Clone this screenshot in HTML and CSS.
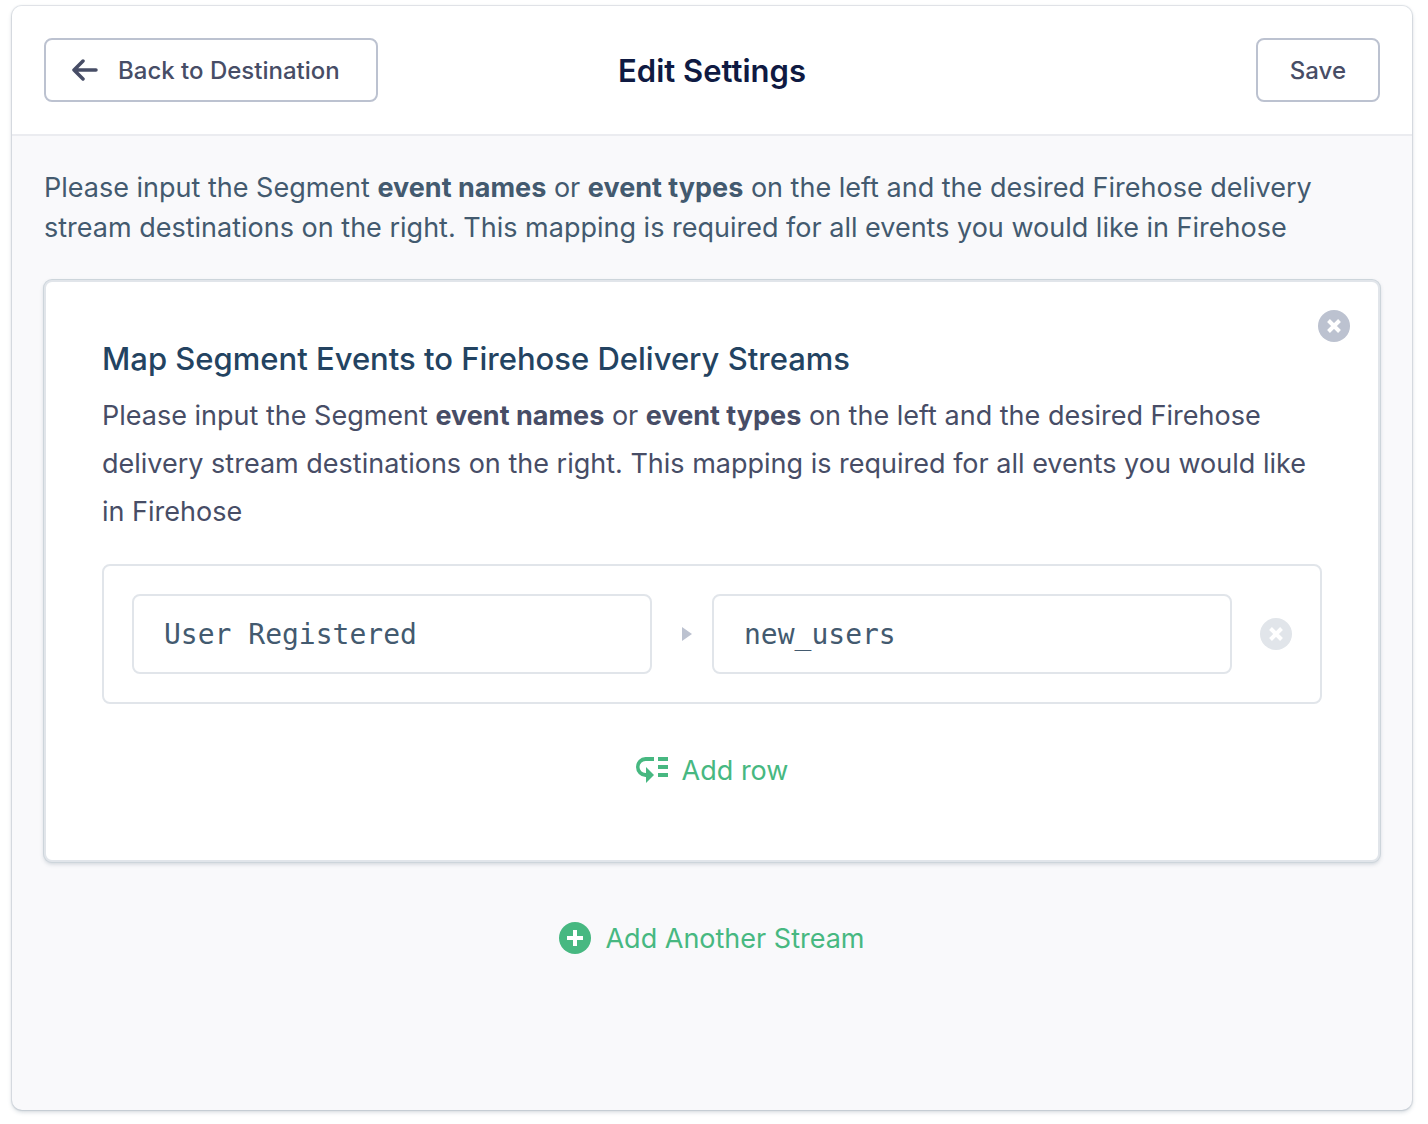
FILE: index.html
```html
<!DOCTYPE html>
<html lang="en">
<head>
  <meta charset="utf-8">
  <title>Edit Settings</title>
  <link rel="stylesheet" href="styles.css">
</head>
<body>
  <div class="card">
    <header class="header">
      <button class="button" type="button">
        <svg class="arrow-icon" width="26" height="22" viewBox="0 0 26 22" fill="none" stroke="currentColor" stroke-width="3.500" stroke-linecap="round" stroke-linejoin="round">
          <path d="M11 2L2 11l9 9M2 11h22"/>
        </svg>
        Back to Destination
      </button>
      <h1 class="title">Edit Settings</h1>
      <button class="button save" type="button">Save</button>
    </header>

    <main class="content">
      <p class="intro">Please input the Segment <strong>event names</strong> or <strong>event types</strong> on the left and the desired Firehose delivery stream destinations on the right. This mapping is required for all events you would like in Firehose</p>

      <section class="panel">
        <button class="icon-button panel-close" type="button" aria-label="Remove stream">
          <svg width="32" height="32" viewBox="0 0 32 32">
            <circle cx="16" cy="16" r="16" fill="currentColor"/>
            <path d="M10.500 10.500l11 11M21.500 10.500l-11 11" stroke="#fff" stroke-width="4"/>
          </svg>
        </button>

        <h2 class="panel-title">Map Segment Events to Firehose Delivery Streams</h2>
        <p class="panel-text">Please input the Segment <strong>event names</strong> or <strong>event types</strong> on the left and the desired Firehose delivery stream destinations on the right. This mapping is required for all events you would like in Firehose</p>

        <div class="mapping">
          <input class="input" type="text" value="User Registered" aria-label="Event name or type">
          <svg class="caret" width="10" height="14" viewBox="0 0 10 14">
            <path d="M0 0l10 7-10 7z" fill="currentColor"/>
          </svg>
          <input class="input" type="text" value="new_users" aria-label="Delivery stream">
          <button class="icon-button row-remove" type="button" aria-label="Remove row">
            <svg width="32" height="32" viewBox="0 0 32 32">
              <circle cx="16" cy="16" r="16" fill="currentColor"/>
              <path d="M10.500 10.500l11 11M21.500 10.500l-11 11" stroke="#fff" stroke-width="4"/>
            </svg>
          </button>
        </div>

        <button class="add-button" type="button">
          <svg width="32" height="26" viewBox="0 0 32 26" fill="currentColor">
            <path d="M18 0v4H9.500a5.500 5.500 0 0 0 0 12H10v-6l8 8-8 8v-6H9.500a9.500 10 0 0 1 0-20z"/>
            <path d="M22 0h10v4H22zM22 8h10v4H22zM22 16h10v4H22z"/>
          </svg>
          Add row
        </button>
      </section>

      <button class="add-button add-stream" type="button">
        <svg width="32" height="32" viewBox="0 0 32 32">
          <circle cx="16" cy="16" r="16" fill="currentColor"/>
          <path d="M16 8v16M8 16h16" stroke="#fff" stroke-width="4"/>
        </svg>
        Add Another Stream
      </button>
    </main>
  </div>
</body>
</html>
```

FILE: styles.css
```css
* {
  margin: 0;
  padding: 0;
  box-sizing: border-box;
}

body {
  background: #fff;
  color: #435a6f;
  font-family: Inter, "Liberation Sans", sans-serif;
  font-size: 27px;
  min-height: 100vh;
  padding: 6px 16px 14px 12px;
  display: flex;
}

.card {
  flex: 1;
  min-width: 0;
  display: flex;
  flex-direction: column;
  background: #f9f9fb;
  border-radius: 10px;
  box-shadow: 0 0 1px 1px rgba(67, 90, 111, 0.15), 0 2px 4px rgba(67, 90, 111, 0.25);
  overflow: hidden;
}

.header {
  background: #fff;
  border-bottom: 2px solid #ebecf0;
  padding: 32px;
  display: grid;
  grid-template-columns: 1fr auto 1fr;
  align-items: center;
}

.title {
  color: #0f1a42;
  font-size: 31px;
  font-weight: 600;
  line-height: 40px;
  padding-top: 2px;
}

.button {
  justify-self: start;
  height: 64px;
  display: flex;
  align-items: center;
  gap: 20px;
  padding: 0 36px 0 26px;
  background: #fff;
  border: 2px solid #bcc2d0;
  border-radius: 8px;
  color: #474d66;
  font-family: inherit;
  font-size: 24px;
  font-weight: 500;
  cursor: pointer;
}

.save {
  justify-self: end;
  padding: 0 32px;
}

.content {
  flex: 1;
  padding: 32px;
  display: flex;
  flex-direction: column;
  align-items: center;
}

.intro {
  line-height: 40px;
  margin-bottom: 32px;
}

strong {
  font-weight: 700;
}

.panel {
  position: relative;
  width: 100%;
  padding: 56px 56px 66px;
  display: flex;
  flex-direction: column;
  align-items: center;
  background: #fff;
  border: 2px solid #e1e5ea;
  border-radius: 8px;
  box-shadow: 0 0 0 1px #cdd5db, 0 2px 4px rgba(67, 90, 111, 0.25);
}

.panel-title {
  width: 100%;
  color: #234361;
  font-size: 31px;
  font-weight: 500;
  line-height: 42px;
  margin-bottom: 12px;
}

.panel-text {
  color: #474d66;
  line-height: 48px;
  margin-bottom: 28px;
}

.icon-button {
  display: block;
  width: 32px;
  height: 32px;
  background: none;
  border: none;
  cursor: pointer;
}

.panel-close {
  position: absolute;
  top: 28px;
  right: 28px;
  color: #bcc2d0;
}

.mapping {
  width: 100%;
  padding: 28px;
  display: flex;
  align-items: center;
  gap: 28px;
  border: 2px solid #e1e5ea;
  border-radius: 8px;
  margin-bottom: 42px;
}

.input {
  flex: 1;
  min-width: 0;
  height: 80px;
  padding: 0 30px;
  background: #fff;
  border: 2px solid #e1e5ea;
  border-radius: 8px;
  color: #435a6f;
  font-family: "DejaVu Sans Mono", "Liberation Mono", monospace;
  font-size: 28px;
}

.caret {
  flex: none;
  margin: 0 -8px 0 2px;
  color: #bcc2d0;
}

.row-remove {
  color: #e1e5ea;
}

.add-button {
  display: flex;
  align-items: center;
  gap: 14px;
  height: 48px;
  background: none;
  border: none;
  color: #47b881;
  font-family: inherit;
  font-size: 27px;
  cursor: pointer;
}

.add-stream {
  margin-top: 52px;
}
```
